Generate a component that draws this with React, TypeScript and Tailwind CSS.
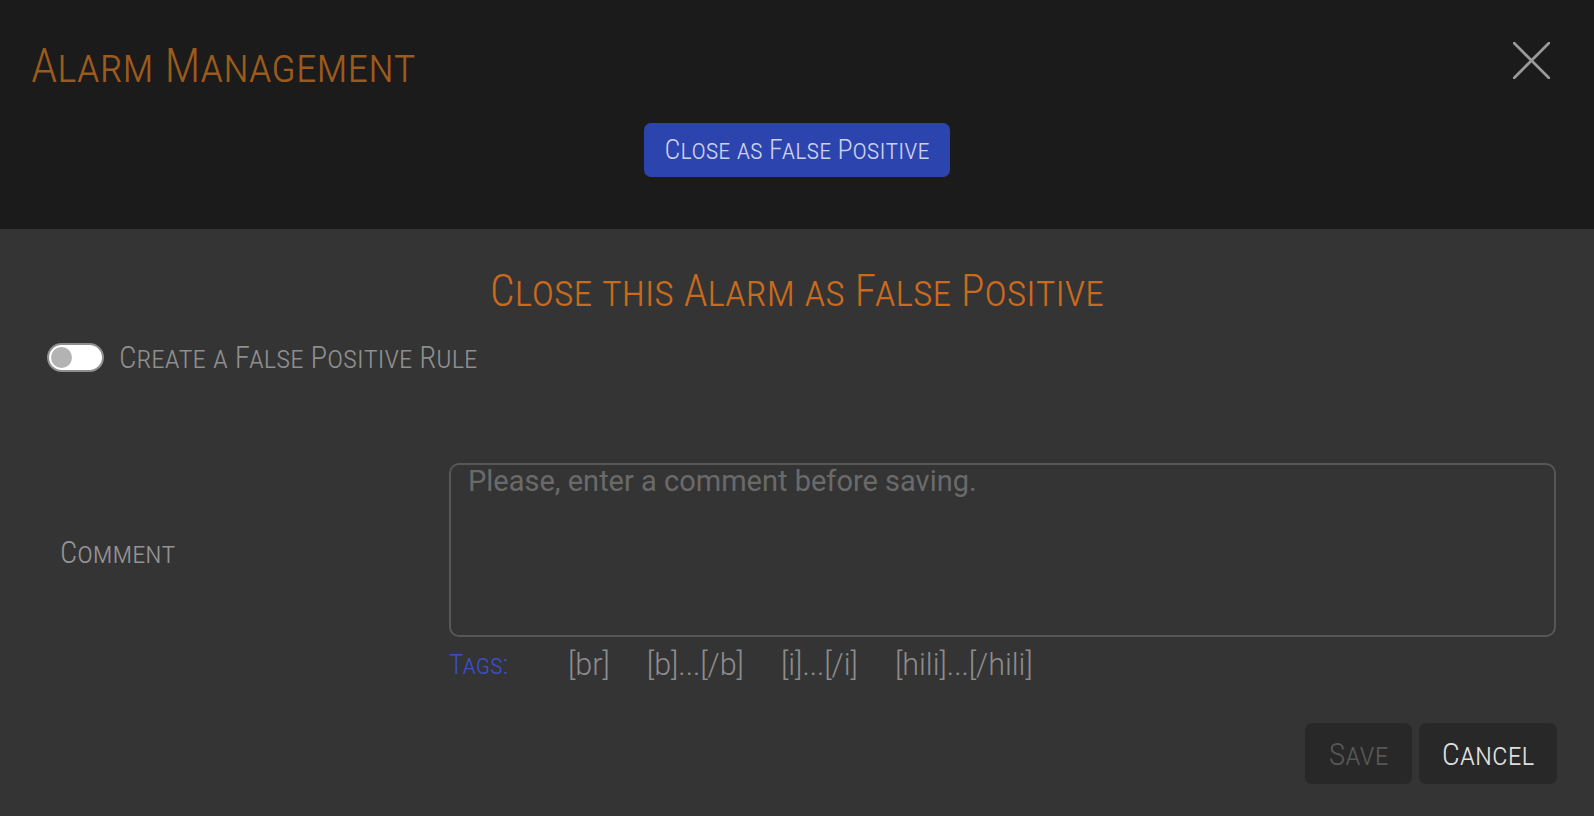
import { useState } from "react";

const cond = "[font-family:'Roboto_Condensed','Liberation_Sans_Narrow',Roboto,sans-serif] [font-variant:small-caps] font-light";

const App = () => {
  const [rule, setRule] = useState(false);
  const [comment, setComment] = useState("");

  return (
    <div className="w-[1594px] h-[816px] flex flex-col overflow-hidden">
      {/* header */}
      <div className="h-[229px] bg-[#1b1b1b] flex flex-col">
        <div className="flex items-start justify-between pl-[31px] pr-[44px] pt-[42px]">
          <h1 className={`${cond} text-[48px] leading-none text-[#9c5a1c]`}>Alarm Management</h1>
          <button className="w-[37px] h-[37px] text-[#9a9a9a]">
            <svg viewBox="0 0 36 36" className="w-full h-full" stroke="currentColor" strokeWidth="2.6" strokeLinecap="round">
              <line x1="1" y1="1" x2="35" y2="35" />
              <line x1="35" y1="1" x2="1" y2="35" />
            </svg>
          </button>
        </div>
        <div className="flex justify-center pt-[33px]">
          <button className={`${cond} w-[306px] h-[54px] rounded-[7px] bg-[#2c44ae] text-[#cdd1ec] text-[28px] leading-none`}>
            Close as False Positive
          </button>
        </div>
      </div>

      {/* body */}
      <div className="flex-1 bg-[#343434] flex flex-col">
        <h2 className={`${cond} text-center text-[43.5px] leading-none text-[#c96a1c] pt-[41px]`}>
          Close this Alarm as False Positive
        </h2>

        <div className="flex items-center pl-[47px] pt-[28px]">
          <button
            onClick={() => setRule(!rule)}
            className="w-[57px] h-[29px] rounded-full bg-white border-2 border-[#8e8e8e] flex items-center px-[2px]"
          >
            <span className={`w-[21px] h-[21px] rounded-full bg-[#b3b3b3] ${rule ? "ml-auto" : ""}`}></span>
          </button>
          <span className={`${cond} ml-[15px] text-[31px] leading-none text-[#8e8e8e]`}>Create a False Positive Rule</span>
        </div>

        <div className="flex items-center pt-[90px]">
          <div className={`${cond} w-[449px] pl-[60px] pt-[8px] text-[30.5px] leading-none text-[#949494]`}>Comment</div>
          <textarea
            value={comment}
            onChange={(e) => setComment(e.target.value)}
            placeholder="Please, enter a comment before saving."
            className="w-[1107px] h-[174px] resize-none rounded-[10px] border-2 border-[#575757] bg-transparent px-[17px] pt-[2px] text-[29px] leading-none [font-family:Roboto,sans-serif] text-[#aaa] placeholder:text-[#6a6a6a] outline-none"
          />
        </div>

        <div className="flex items-center pl-[449px] pt-[13px]">
          <span className={`${cond} w-[119px] text-[28px] leading-none text-[#3a50c4]`}>Tags:</span>
          <div className="flex gap-[37px] [font-family:Roboto,sans-serif] font-light text-[30.5px] leading-none text-[#8c8c8c]">
            <span>[br]</span>
            <span>[b]...[/b]</span>
            <span>[i]...[/i]</span>
            <span>[hili]...[/hili]</span>
          </div>
        </div>

        <div className="flex justify-end gap-[7px] pr-[37px] pt-[43px]">
          <button className={`${cond} w-[107px] h-[61px] rounded-[7px] bg-[#282828] text-[32px] leading-none text-[#575757]`}>Save</button>
          <button className={`${cond} w-[138px] h-[61px] rounded-[7px] bg-[#282828] text-[32px] leading-none text-[#dedede]`}>Cancel</button>
        </div>
      </div>
    </div>
  );
};

export default App;
